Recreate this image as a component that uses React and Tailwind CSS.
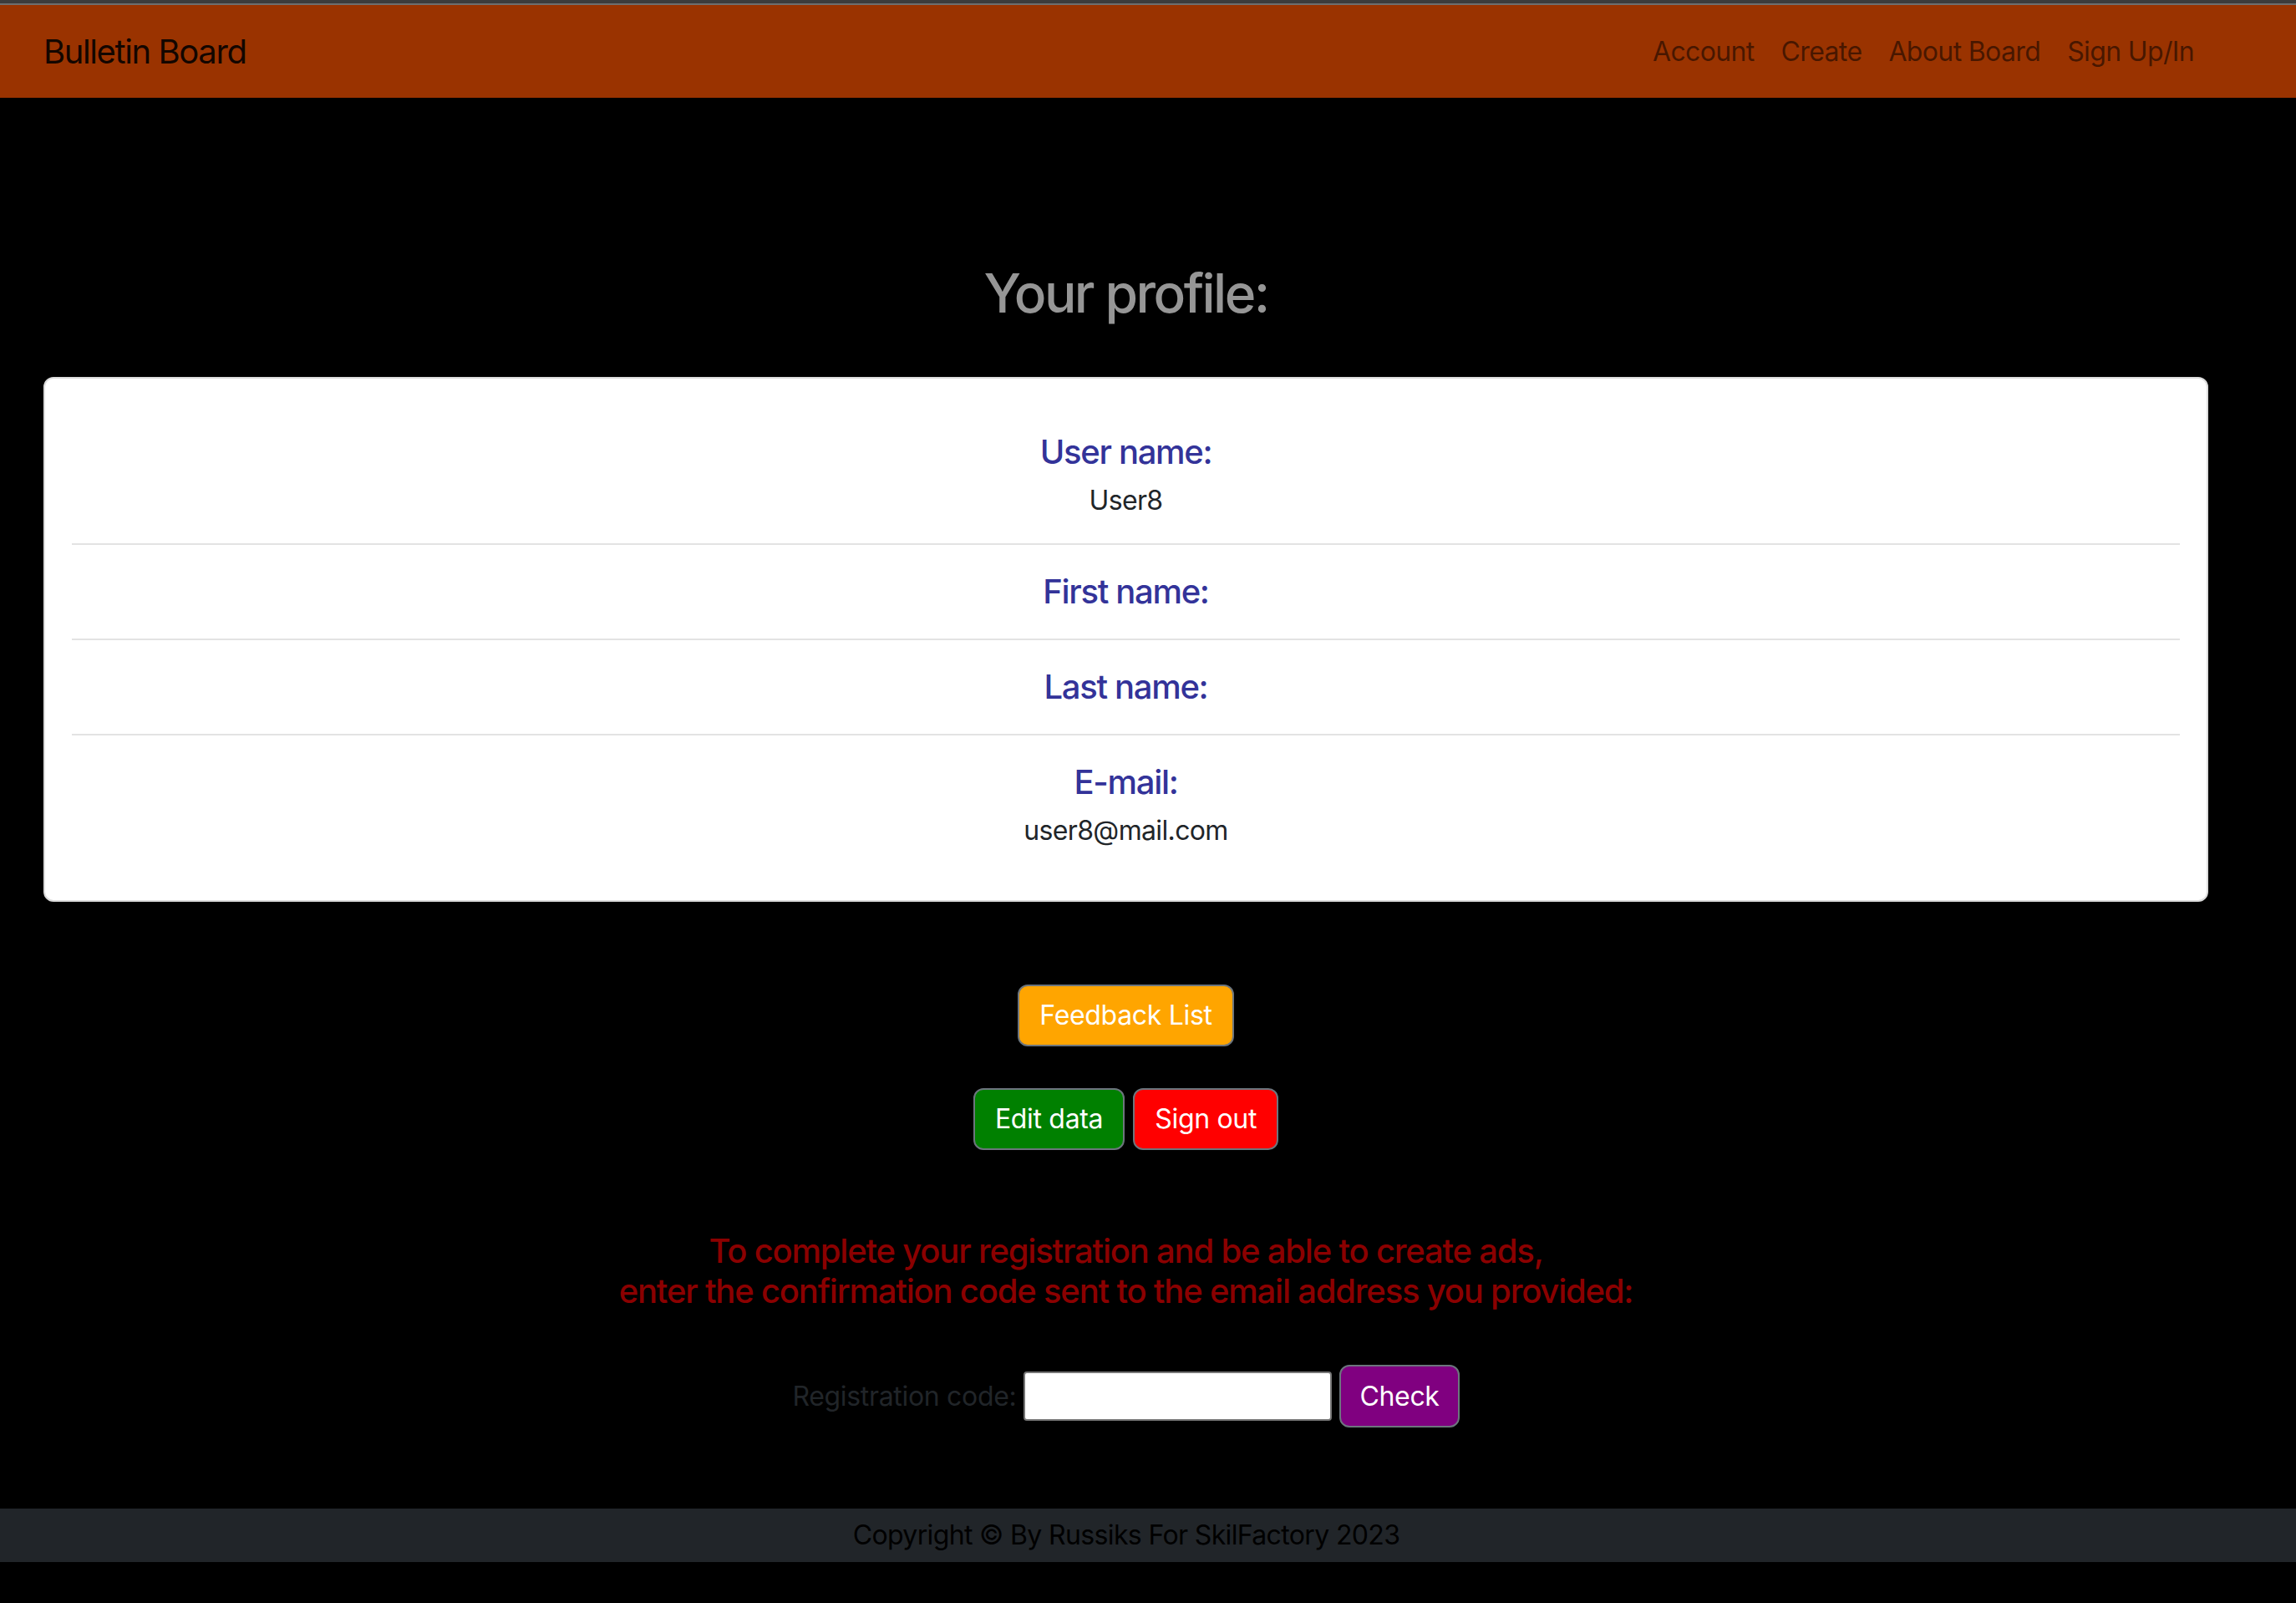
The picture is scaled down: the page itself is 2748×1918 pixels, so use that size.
import React from "react";

const font = { fontFamily: "Inter, 'Noto Sans', sans-serif" };

function Row({ label, value, last }) {
  return (
    <li className={`text-center ${last ? "" : "border-b-2 border-[#e3e3e3]"} ${value ? "pt-[32px] pb-[27px]" : "py-[32px]"}`}>
      <h5 className="text-[40px] leading-[48px] font-medium tracking-[-0.033em] text-[#333399]">{label}</h5>
      {value && <p className="mt-[10px] text-[32px] leading-[48px] tracking-[-0.02em] text-[#212529]">{value}</p>}
    </li>
  );
}

export default function App() {
  const links = ["Account", "Create", "About Board", "Sign Up/In"];

  return (
    <div className="min-h-screen bg-black" style={font}>
      <div className="h-[4px] bg-[#3c3c3c]" />
      <div className="h-[2px] bg-[#6e6e6e]" />

      <nav className="flex h-[111px] items-center justify-between bg-[#9a3300] pl-[52px] pr-[106px]">
        <a className="text-[40px] leading-[60px] tracking-[-0.035em] text-black/90">Bulletin Board</a>
        <ul className="flex">
          {links.map((l) => (
            <li key={l}>
              <a className="block px-[16px] text-[32px] leading-[48px] tracking-[-0.02em] text-black/55">{l}</a>
            </li>
          ))}
        </ul>
      </nav>

      <main className="pl-[52px] pr-[105px] text-center tracking-[-0.02em]">
        <h2 className="mt-[195px] text-[64px] leading-[77px] font-medium tracking-[-0.04em] text-[#969696]">Your profile:</h2>

        <div className="mt-[62px] rounded-[12px] border-2 border-[#dcdcdc] bg-white px-[32px] py-[32px]">
          <ul>
            <Row label="User name:" value="User8" />
            <Row label="First name:" />
            <Row label="Last name:" />
            <Row label="E-mail:" value="user8@mail.com" last />
          </ul>
        </div>

        <div className="mt-[99px] flex justify-center">
          <button className="rounded-[12px] border-2 border-[#6c757d] bg-[#ffa500] px-[24px] py-[11px] text-[32px] leading-[48px] text-white">
            Feedback List
          </button>
        </div>

        <div className="mt-[50px] flex justify-center gap-[10px]">
          <button className="rounded-[12px] border-2 border-[#6c757d] bg-[#008000] px-[24px] py-[11px] text-[32px] leading-[48px] text-white">
            Edit data
          </button>
          <button className="rounded-[12px] border-2 border-[#6c757d] bg-[#ff0000] px-[24px] py-[11px] text-[32px] leading-[48px] text-white">
            Sign out
          </button>
        </div>

        <h5 className="mt-[97px] text-[40px] leading-[48px] font-medium tracking-[-0.03em] text-[#8b0000]">
          To complete your registration and be able to create ads,
          <br />
          enter the confirmation code sent to the email address you provided:
        </h5>

        <div className="mt-[64px] flex items-center justify-center gap-[9px]">
          <label className="text-[32px] leading-[48px] text-[#212529]">Registration code:</label>
          <input type="text" className="h-[59px] w-[369px] rounded-[4px] border-2 border-[#767676] bg-white px-2 text-[28px] outline-none" />
          <button className="rounded-[12px] border-2 border-[#6c757d] bg-[#800080] px-[22px] py-[11px] text-[32px] leading-[49px] text-white">
            Check
          </button>
        </div>
      </main>

      <footer className="mt-[97px] flex h-[64px] items-center justify-center bg-[#212529] pr-[52px]">
        <p className="text-[32px] leading-[48px] tracking-[-0.02em] text-black">Copyright © By Russiks For SkilFactory 2023</p>
      </footer>
    </div>
  );
}
